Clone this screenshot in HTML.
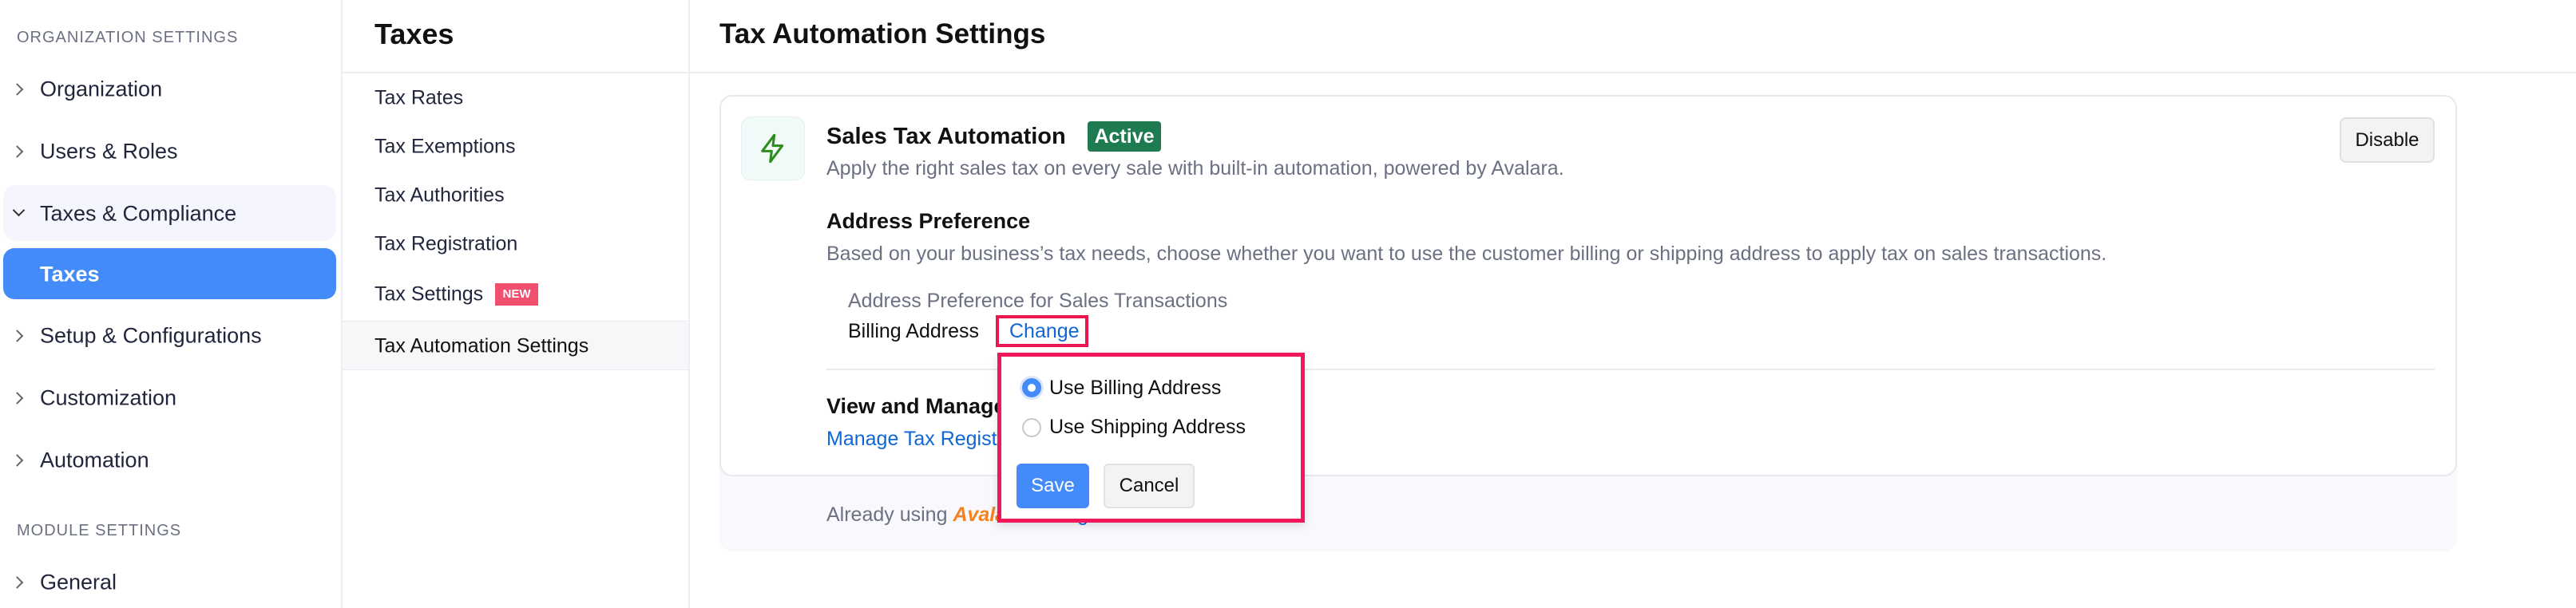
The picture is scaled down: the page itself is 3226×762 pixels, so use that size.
<!DOCTYPE html>
<html><head><meta charset="utf-8"><style>
*{box-sizing:border-box;margin:0;padding:0}
body{width:3226px;height:762px;overflow:hidden;background:#fff;font-family:"Liberation Sans",sans-serif;position:relative;color:#21263c}
.a{position:absolute;white-space:nowrap}
.sb{left:0;top:0;width:429px;height:762px;border-right:2px solid #eceef3;background:#fff}
.cap{font-size:20px;color:#6b7083;letter-spacing:1px;left:21px}
.it{font-size:27px;color:#21263c;left:50px;transform:translateY(-50%)}
.chev{left:18px;width:11px;height:11px;border-right:2px solid #666;border-top:2px solid #666;transform:translateY(-50%) rotate(45deg)}
.p2{left:429px;top:0;width:435px;height:762px;border-right:2px solid #eceef3}
.sub{font-size:25px;color:#21263c;left:469px;transform:translateY(-50%)}
.g{color:#6b7083}
.bl{color:#0e66d8}
</style></head><body>
<div class="a sb"></div>
<div class="a cap" style="top:36px">ORGANIZATION SETTINGS</div>
<div class="a chev" style="top:112px;left:16px"></div><div class="a it" style="top:112px">Organization</div>
<div class="a chev" style="top:190px;left:16px"></div><div class="a it" style="top:190px">Users &amp; Roles</div>
<div class="a" style="left:4px;top:232px;width:417px;height:70px;background:#f5f6fd;border-radius:16px"></div>
<div class="a" style="left:18px;top:258px;width:11px;height:11px;border-right:2px solid #333;border-bottom:2px solid #333;transform:rotate(45deg)"></div>
<div class="a it" style="top:268px">Taxes &amp; Compliance</div>
<div class="a" style="left:4px;top:311px;width:417px;height:64px;background:#438bf8;border-radius:14px"></div>
<div class="a it" style="top:344px;color:#fff;font-weight:bold">Taxes</div>
<div class="a chev" style="top:421px;left:16px"></div><div class="a it" style="top:421px">Setup &amp; Configurations</div>
<div class="a chev" style="top:499px;left:16px"></div><div class="a it" style="top:499px">Customization</div>
<div class="a chev" style="top:577px;left:16px"></div><div class="a it" style="top:577px">Automation</div>
<div class="a cap" style="top:654px">MODULE SETTINGS</div>
<div class="a chev" style="top:730px;left:16px"></div><div class="a it" style="top:730px">General</div>

<div class="a p2"></div>
<div class="a" style="left:429px;top:90px;width:2797px;height:2px;background:#eceef3"></div>
<div class="a" style="left:469px;top:22px;font-size:36px;font-weight:bold;color:#111">Taxes</div>
<div class="a sub" style="top:123px">Tax Rates</div>
<div class="a sub" style="top:184px">Tax Exemptions</div>
<div class="a sub" style="top:245px">Tax Authorities</div>
<div class="a sub" style="top:306px">Tax Registration</div>
<div class="a sub" style="top:369px">Tax Settings</div>
<div class="a" style="left:620px;top:355px;width:54px;height:28px;background:#f0506e;color:#fff;font-size:15px;font-weight:bold;text-align:center;line-height:28px">NEW</div>
<div class="a" style="left:429px;top:402px;width:433px;height:62px;background:#f7f7f9;border-top:1px solid #ebebef;border-bottom:1px solid #ebebef"></div>
<div class="a sub" style="top:434px;color:#111">Tax Automation Settings</div>

<div class="a" style="left:901px;top:23px;font-size:35px;font-weight:bold;color:#111">Tax Automation Settings</div>
<div class="a" style="left:901px;top:119px;width:2176px;height:572px;background:#f8f8fd;border-radius:16px"></div>
<div class="a" style="left:901px;top:119px;width:2176px;height:478px;background:#fff;border:2px solid #e8e9f0;border-radius:16px"></div>
<div class="a" style="left:928px;top:146px;width:80px;height:80px;background:#f0fbf9;border:1px solid #e2f1ef;border-radius:12px"></div>
<svg class="a" style="left:948px;top:165px" width="40" height="42" viewBox="0 0 24 24" fill="none" stroke="#2e8b1f" stroke-width="1.8" stroke-linejoin="round"><path d="M13 2L4 14h7l-1 8 9-12h-7z"/></svg>
<div class="a" style="left:1035px;top:155px;font-size:29px;font-weight:bold;color:#111">Sales Tax Automation</div>
<div class="a" style="left:1362px;top:152px;width:92px;height:38px;background:#1e7a4f;color:#fff;font-size:25px;font-weight:bold;text-align:center;line-height:38px;border-radius:4px">Active</div>
<div class="a g" style="left:1035px;top:197px;font-size:25px">Apply the right sales tax on every sale with built-in automation, powered by Avalara.</div>
<div class="a" style="left:2930px;top:147px;width:119px;height:57px;background:#f3f3f5;border:2px solid #e0e0e4;border-radius:8px;font-size:24px;text-align:center;line-height:53px;color:#111">Disable</div>
<div class="a" style="left:1035px;top:262px;font-size:27px;font-weight:bold;color:#111">Address Preference</div>
<div class="a g" style="left:1035px;top:304px;font-size:25px">Based on your business’s tax needs, choose whether you want to use the customer billing or shipping address to apply tax on sales transactions.</div>
<div class="a g" style="left:1062px;top:363px;font-size:25px">Address Preference for Sales Transactions</div>
<div class="a" style="left:1062px;top:401px;font-size:25px;color:#111">Billing Address</div>
<div class="a" style="left:1247px;top:395px;width:116px;height:40px;border:4px solid #e8174f"></div>
<div class="a bl" style="left:1264px;top:401px;font-size:25px">Change</div>
<div class="a" style="left:1035px;top:462px;width:2014px;height:2px;background:#ebebef"></div>
<div class="a" style="left:1035px;top:494px;font-size:27px;font-weight:bold;color:#111">View and Manage Tax Registrations</div>
<div class="a bl" style="left:1035px;top:536px;font-size:25px">Manage Tax Registrations</div>
<div class="a g" style="left:1035px;top:631px;font-size:25px">Already using <span style="color:#f58220;font-weight:bold;font-style:italic">Avalara</span> <span class="bl">Configure</span></div>

<div class="a" style="left:1249px;top:442px;width:385px;height:213px;background:#fff;border:5px solid #f0175a;box-shadow:0 4px 10px rgba(0,0,0,.12)"></div>
<div class="a" style="left:1280px;top:474px;width:24px;height:24px;border-radius:50%;border:7px solid #438bf8;background:#fff;box-shadow:0 0 0 3px #dbe6fb"></div>
<div class="a" style="left:1314px;top:472px;font-size:25px;color:#111">Use Billing Address</div>
<div class="a" style="left:1280px;top:524px;width:24px;height:24px;border-radius:50%;border:2px solid #c8c8cc;background:#fff"></div>
<div class="a" style="left:1314px;top:521px;font-size:25px;color:#111">Use Shipping Address</div>
<div class="a" style="left:1273px;top:581px;width:91px;height:56px;background:#438bf8;border-radius:6px;color:#fff;font-size:24px;text-align:center;line-height:56px">Save</div>
<div class="a" style="left:1382px;top:581px;width:114px;height:56px;background:#f3f3f5;border:2px solid #e2e2e6;border-radius:6px;color:#111;font-size:24px;text-align:center;line-height:52px">Cancel</div>
</body></html>
